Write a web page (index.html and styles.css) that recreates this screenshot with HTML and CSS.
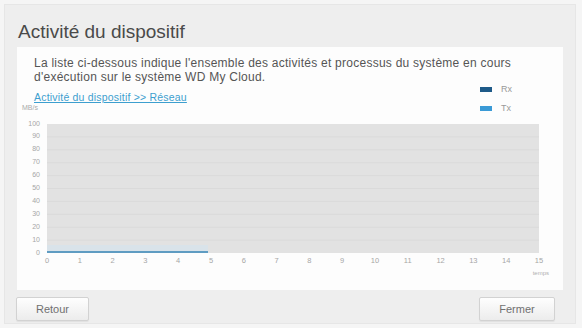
FILE: index.html
```html
<!DOCTYPE html>
<html lang="fr">
<head>
	<meta charset="UTF-8">
	<title>Activité du dispositif</title>
	<link rel="stylesheet" href="styles.css">
</head>
<body>
	<div class="dialog">
		<h1 class="title">Activité du dispositif</h1>
		<div class="panel">
			<p class="desc">La liste ci-dessous indique l'ensemble des activités et processus du système en cours d'exécution sur le système WD My Cloud.</p>
			<div class="chart-head">
				<div class="head-left">
					<a class="crumb" href="#">Activité du dispositif &gt;&gt; Réseau</a>
					<div class="unit">MB/s</div>
				</div>
				<div class="legend">
					<div class="legend-item"><span class="swatch swatch-rx"></span>Rx</div>
					<div class="legend-item"><span class="swatch swatch-tx"></span>Tx</div>
				</div>
			</div>
			<div class="chart">
				<div class="y-axis">
					<div>100</div><div>90</div><div>80</div><div>70</div><div>60</div><div>50</div>
					<div>40</div><div>30</div><div>20</div><div>10</div><div>0</div>
				</div>
				<svg class="plot" viewBox="0 0 492 129" preserveAspectRatio="none">
					<rect x="0" y="0" width="492" height="129" fill="#e2e2e2"/>
					<g stroke="#dadada" stroke-width="1">
						<line x1="0" y1="12.9" x2="492" y2="12.9"/>
						<line x1="0" y1="25.8" x2="492" y2="25.8"/>
						<line x1="0" y1="38.7" x2="492" y2="38.7"/>
						<line x1="0" y1="51.6" x2="492" y2="51.6"/>
						<line x1="0" y1="64.5" x2="492" y2="64.5"/>
						<line x1="0" y1="77.4" x2="492" y2="77.4"/>
						<line x1="0" y1="90.3" x2="492" y2="90.3"/>
						<line x1="0" y1="103.2" x2="492" y2="103.2"/>
						<line x1="0" y1="116.1" x2="492" y2="116.1"/>
					</g>
					<rect x="0" y="121" width="161" height="7" fill="#d9e3ea"/>
					<line x1="0" y1="128" x2="161" y2="128" stroke="#5f9cc2" stroke-width="2"/>
				</svg>
			</div>
			<div class="x-axis">
				<div>0</div><div>1</div><div>2</div><div>3</div><div>4</div><div>5</div><div>6</div><div>7</div>
				<div>8</div><div>9</div><div>10</div><div>11</div><div>12</div><div>13</div><div>14</div><div>15</div>
			</div>
			<div class="x-unit">temps</div>
		</div>
		<div class="footer">
			<button class="btn">Retour</button>
			<button class="btn">Fermer</button>
		</div>
	</div>
</body>
</html>
```

FILE: styles.css
```css
* {
	margin: 0;
	padding: 0;
	box-sizing: border-box;
}

body {
	background-color: #f5f5f5;
	font-family: "Liberation Sans", Arial, sans-serif;
	width: 582px;
	height: 328px;
	overflow: hidden;
}

.dialog {
	margin: 4px;
	width: 572px;
	height: 320px;
	background-color: #eeeeee;
	border: 1px solid #e6e6e6;
	padding: 16px 0 0 12px;
}

.title {
	font-size: 19px;
	font-weight: normal;
	line-height: 22px;
	color: #4a4a4a;
	margin-left: 1px;
}

.panel {
	margin-top: 4px;
	width: 546px;
	height: 243px;
	background-color: #fdfdfd;
}

.desc {
	padding: 9px 30px 0 17px;
	font-size: 12px;
	letter-spacing: 0.25px;
	line-height: 14px;
	color: #555555;
	height: 37px;
}

.chart-head {
	display: flex;
	justify-content: space-between;
	height: 40px;
	padding: 0 50px 0 17px;
}

.crumb {
	display: block;
	margin-top: 7px;
	font-size: 10.5px;
	letter-spacing: 0.2px;
	line-height: 12px;
	color: #3d9fcf;
}

.unit {
	margin-left: -12px;
	font-size: 7px;
	line-height: 9px;
	color: #aaaaaa;
}

.legend {
	display: flex;
	flex-direction: column;
	gap: 9px;
	width: 33px;
}

.legend-item {
	display: flex;
	align-items: center;
	height: 10px;
	font-size: 9px;
	color: #999999;
}

.swatch {
	width: 12px;
	height: 5px;
	margin-right: 9px;
}

.swatch-rx {
	background-color: #1e5a88;
}

.swatch-tx {
	background-color: #3a9ad6;
}

.chart {
	display: flex;
	height: 129px;
}

.y-axis {
	width: 30px;
	height: 141.9px;
	margin-top: -6.45px;
	display: flex;
	flex-direction: column;
	padding-right: 7px;
}

.y-axis div {
	flex: 1;
	text-align: right;
	font-size: 7px;
	line-height: 12.9px;
	color: #a6a6a6;
}

.plot {
	display: block;
	width: 492px;
	height: 129px;
}

.x-axis {
	display: flex;
	margin: 3px 0 0 13.6px;
}

.x-axis div {
	width: 32.8px;
	text-align: center;
	font-size: 7.5px;
	line-height: 10px;
	color: #a6a6a6;
}

.x-unit {
	width: 532px;
	margin-top: 3px;
	text-align: right;
	font-size: 6px;
	line-height: 8px;
	color: #b0b0b0;
}

.footer {
	display: flex;
	justify-content: space-between;
	margin-top: 7px;
	padding-right: 20px;
	margin-left: -1px;
}

.btn {
	width: 73px;
	height: 24px;
	border: 1px solid #d2d2d2;
	border-radius: 2px;
	background: linear-gradient(#fefefe, #ececec);
	box-shadow: 0 1px 1px rgba(0, 0, 0, 0.06);
	font-family: "Liberation Sans", Arial, sans-serif;
	font-size: 11px;
	color: #707070;
}

.btn:last-child {
	width: 76px;
}
```
